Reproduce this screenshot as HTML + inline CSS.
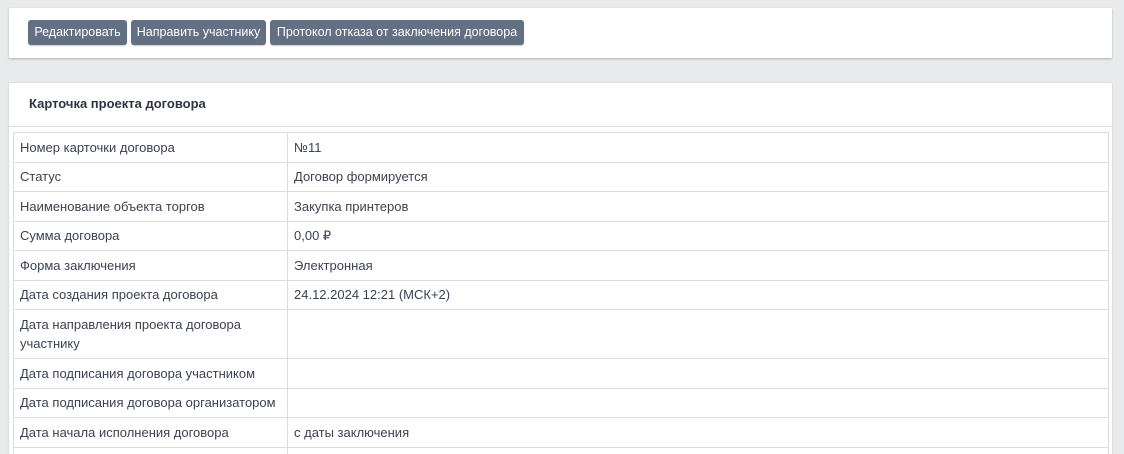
<!DOCTYPE html>
<html><head><meta charset="utf-8"><style>
html,body{margin:0;height:454px;overflow:hidden}
body{background:#e9eaec;font-family:"Liberation Sans",sans-serif;width:1124px;color:#3b4252;position:relative}
.c1{position:absolute;left:9px;top:8px;width:1103px;height:50px;background:#fff;box-shadow:0 1px 2px rgba(0,0,0,.25)}
.b{position:absolute;top:12px;height:25px;background:#637083;color:#fff;font-size:12.5px;line-height:25px;border-radius:3px;text-align:center;box-shadow:0 1px 1px rgba(0,0,0,.2);white-space:nowrap}
.c2{position:absolute;left:9px;top:83px;width:1103px;height:371px;background:#fff;box-shadow:0 0 2px rgba(0,0,0,.15);overflow:hidden}
.h{position:absolute;left:20px;top:13px;font-size:13px;font-weight:bold;color:#2e3440}
.hr{position:absolute;left:0;right:0;top:43px;border-top:1px solid #dcdce0}
table{position:absolute;left:4px;top:49px;width:1096px;border-collapse:collapse;font-size:13px}
td{border:1px solid #dcdcdc;padding:0 6px;height:28.5px;vertical-align:middle;line-height:19px}
td:first-child{width:261px}
</style></head><body>
<div class="c1">
<div class="b" style="left:19px;width:99px">Редактировать</div>
<div class="b" style="left:122px;width:135px">Направить участнику</div>
<div class="b" style="left:261px;width:254px">Протокол отказа от заключения договора</div>
</div>
<div class="c2">
<div class="h">Карточка проекта договора</div>
<div class="hr"></div>
<table>
<tr><td>Номер карточки договора</td><td>№11</td></tr>
<tr><td>Статус</td><td>Договор формируется</td></tr>
<tr><td>Наименование объекта торгов</td><td>Закупка принтеров</td></tr>
<tr><td>Сумма договора</td><td>0,00 ₽</td></tr>
<tr><td>Форма заключения</td><td>Электронная</td></tr>
<tr><td>Дата создания проекта договора</td><td>24.12.2024 12:21 (МСК+2)</td></tr>
<tr><td style="height:48px">Дата направления проекта договора<br>участнику</td><td></td></tr>
<tr><td>Дата подписания договора участником</td><td></td></tr>
<tr><td>Дата подписания договора организатором</td><td></td></tr>
<tr><td>Дата начала исполнения договора</td><td>с даты заключения</td></tr>
<tr><td>&nbsp;</td><td></td></tr>
</table>
</div>
</body></html>
